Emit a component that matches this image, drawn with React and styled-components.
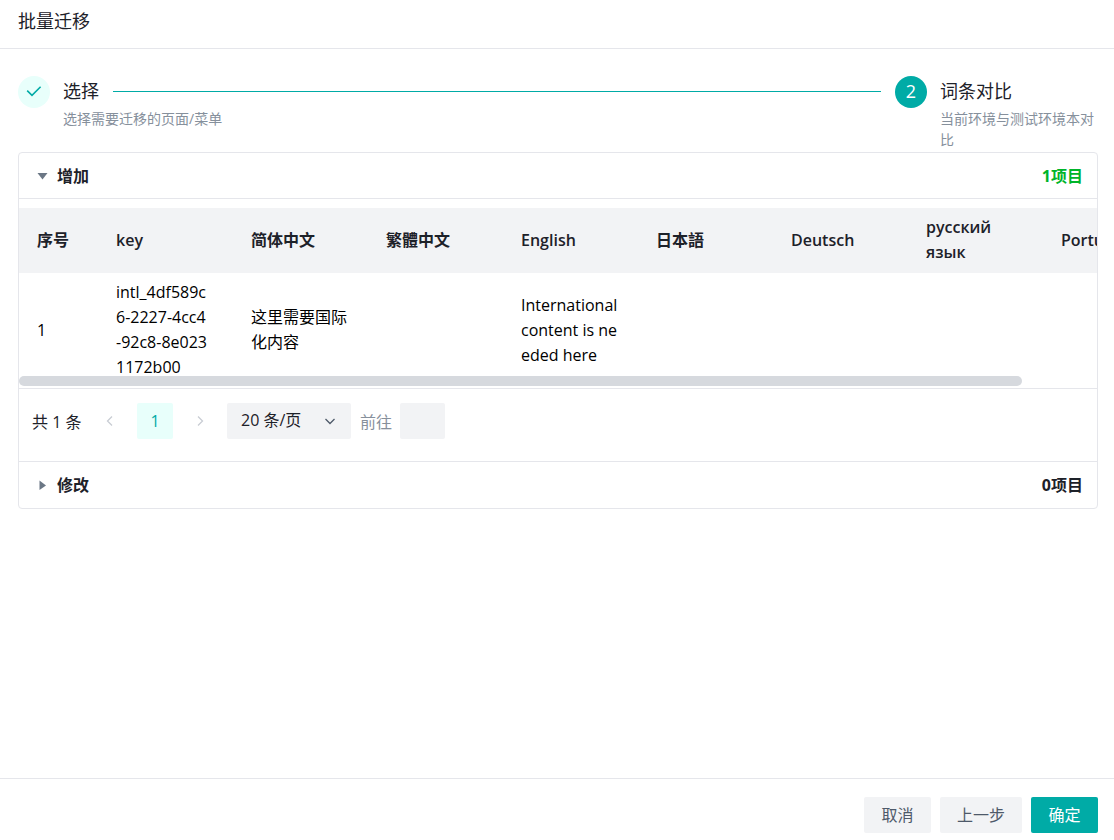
import { useEffect, useRef, useState } from 'react';
import styled, { createGlobalStyle } from 'styled-components';

const GlobalStyle = createGlobalStyle`
  * {
    box-sizing: border-box;
  }
  body {
    margin: 0;
    background: #fff;
    color: #1d2129;
    font-family: 'Open Sans', 'Noto Sans CJK SC', sans-serif;
    font-size: 16px;
  }
  button, input, select {
    font: inherit;
    color: inherit;
    border: none;
    outline: none;
  }
  button {
    padding: 0;
    background: none;
    cursor: pointer;
  }
`;

const Page = styled.div`
  display: flex;
  flex-direction: column;
  min-height: 100vh;
`;

const Header = styled.header`
  padding: 8px 18px 13px;
  border-bottom: 1px solid #e5e6eb;
`;

const Title = styled.h1`
  margin: 0;
  font-size: 18px;
  font-weight: 400;
  line-height: 27px;
`;

const Main = styled.main`
  flex: 1;
  padding: 27px 16px 18px 18px;
`;

const Steps = styled.ol`
  display: flex;
  gap: 14px;
  margin: 0 0 2px;
  padding: 0;
  list-style: none;
`;

const Step = styled.li`
  display: flex;
  gap: 13px;
  flex: ${({ $grow }) => ($grow ? '1' : 'none')};
`;

const StepIcon = styled.div`
  display: flex;
  align-items: center;
  justify-content: center;
  flex: none;
  width: 32px;
  height: 32px;
  padding-bottom: 2px;
  border-radius: 50%;
  font-size: 18px;
  background: ${({ $done }) => ($done ? '#e8fffb' : '#00aba6')};
  color: ${({ $done }) => ($done ? '#00aba6' : '#fff')};
`;

const StepContent = styled.div`
  flex: 1;
  max-width: ${({ $narrow }) => ($narrow ? '158px' : 'none')};
`;

const StepTitle = styled.div`
  display: flex;
  align-items: center;
  gap: 14px;
  margin-bottom: 2px;
  font-size: 18px;
  line-height: 30px;
`;

const StepLine = styled.span`
  flex: 1;
  height: 1px;
  background: #00aba6;
`;

const StepDescription = styled.div`
  font-size: 14px;
  line-height: 21px;
  color: #86909c;
`;

const Collapse = styled.div`
  border: 1px solid #e5e6eb;
  border-radius: 4px;
  overflow: hidden;
`;

const Item = styled.section`
  & + & {
    border-top: 1px solid #e5e6eb;
  }
`;

const ItemHeader = styled.button`
  display: flex;
  align-items: center;
  gap: 9px;
  width: 100%;
  height: 46px;
  padding: 0 14px 2px 18px;
  font-weight: 700;
  text-align: left;
  border-bottom: ${({ $open }) => ($open ? '1px solid #e5e6eb' : 'none')};
`;

const Arrow = styled.svg`
  flex: none;
  width: 11px;
  height: 11px;
  fill: #6b7785;
`;

const ItemCount = styled.span`
  margin-left: auto;
  color: ${({ $added }) => ($added ? '#00b42a' : '#1d2129')};
`;

const ItemBody = styled.div`
  padding: 9px 0 22px;
`;

const TableWrapper = styled.div`
  position: relative;
`;

const TableScroll = styled.div`
  overflow-x: auto;
  scrollbar-width: none;
`;

const Table = styled.table`
  width: 1159px;
  table-layout: fixed;
  border-collapse: separate;
  border-spacing: 0;
`;

const IndexCol = styled.col`
  width: 79px;
`;

const Th = styled.th`
  padding: 7px 18px 8px;
  font-weight: 600;
  line-height: 25px;
  text-align: left;
  background: #f2f3f5;
`;

const Td = styled.td`
  padding: 7px ${({ $code }) => ($code ? '24px' : '18px')} 8px 18px;
  line-height: 25px;
  color: #000;
  word-break: break-all;
  border-bottom: 1px solid #e5e6eb;
`;

const ScrollTrack = styled.div`
  position: absolute;
  left: 0;
  right: 0;
  bottom: 3px;
  height: 10px;
`;

const ScrollThumb = styled.div`
  height: 100%;
  border-radius: 5px;
  background: #d6d9de;
`;

const Pager = styled.nav`
  display: flex;
  align-items: center;
  gap: 9px;
  margin-top: 14px;
  padding-left: 13px;
`;

const Total = styled.span`
  min-width: 51px;
`;

const PagerButton = styled.button`
  display: flex;
  align-items: center;
  justify-content: center;
  width: 36px;
  height: 36px;
  border-radius: 2px;
  background: ${({ $active }) => ($active ? '#e8fffb' : 'transparent')};
  color: ${({ $active }) => ($active ? '#00aba6' : '#c9cdd4')};
`;

const SelectBox = styled.div`
  position: relative;
  color: #4e5969;
`;

const Select = styled.select`
  display: block;
  width: 124px;
  height: 36px;
  padding: 0 14px 2px;
  border-radius: 2px;
  background: #f2f3f5;
  color: #1d2129;
  appearance: none;
`;

const SelectArrow = styled.span`
  position: absolute;
  top: 0;
  right: 14px;
  display: flex;
  align-items: center;
  height: 100%;
  pointer-events: none;
`;

const JumpLabel = styled.label`
  display: flex;
  align-items: center;
  gap: 8px;
  color: #86909c;
`;

const JumpInput = styled.input`
  width: 45px;
  height: 36px;
  padding: 0 8px;
  border-radius: 2px;
  background: #f2f3f5;
  text-align: center;
`;

const Footer = styled.footer`
  display: flex;
  justify-content: flex-end;
  gap: 9px;
  padding: 18px 16px 7px;
  border-top: 1px solid #e5e6eb;
`;

const Button = styled.button`
  min-width: 67px;
  height: 36px;
  padding: 0 17px 2px;
  border-radius: 2px;
  background: ${({ $primary }) => ($primary ? '#00aba6' : '#f2f3f5')};
  color: ${({ $primary }) => ($primary ? '#fff' : '#4e5969')};
`;

const columns = [
  { title: '序号', field: 'index' },
  { title: 'key', field: 'key', code: true },
  { title: '简体中文', field: 'zhCN' },
  { title: '繁體中文', field: 'zhTW' },
  { title: 'English', field: 'en' },
  { title: '日本語', field: 'ja' },
  { title: 'Deutsch', field: 'de' },
  { title: 'русский язык', field: 'ru' },
  { title: 'Português', field: 'pt' },
];

const rows = [
  {
    index: 1,
    key: 'intl_4df589c6-2227-4cc4-92c8-8e0231172b00',
    zhCN: '这里需要国际化内容',
    en: 'International content is needed here',
  },
];

const Chevron = ({ d }) => (
  <svg width="14" height="14" viewBox="0 0 14 14" fill="none" stroke="currentColor" strokeWidth="1.3" aria-hidden="true">
    <path d={d} />
  </svg>
);

const EntryTable = () => {
  const scrollRef = useRef(null);
  const [thumb, setThumb] = useState({ width: 0, left: 0 });

  const updateThumb = () => {
    const { clientWidth, scrollWidth, scrollLeft } = scrollRef.current;
    setThumb({
      width: clientWidth < scrollWidth ? (clientWidth / scrollWidth) * 100 : 0,
      left: (scrollLeft / scrollWidth) * 100,
    });
  };

  useEffect(() => {
    updateThumb();
    window.addEventListener('resize', updateThumb);
    return () => window.removeEventListener('resize', updateThumb);
  }, []);

  return (
    <TableWrapper>
      <TableScroll ref={scrollRef} onScroll={updateThumb}>
        <Table>
          <colgroup>
            <IndexCol />
            <col span={columns.length - 1} />
          </colgroup>
          <thead>
            <tr>
              {columns.map((column) => (
                <Th key={column.field} scope="col">{column.title}</Th>
              ))}
            </tr>
          </thead>
          <tbody>
            {rows.map((row) => (
              <tr key={row.key}>
                {columns.map((column) => (
                  <Td key={column.field} $code={column.code}>{row[column.field]}</Td>
                ))}
              </tr>
            ))}
          </tbody>
        </Table>
      </TableScroll>
      <ScrollTrack>
        <ScrollThumb style={{ width: `${thumb.width}%`, marginLeft: `${thumb.left}%` }} />
      </ScrollTrack>
    </TableWrapper>
  );
};

const Pagination = () => {
  const [pageSize, setPageSize] = useState('20');
  const [jump, setJump] = useState('');

  return (
    <Pager>
      <Total>共 1 条</Total>
      <PagerButton type="button" aria-label="上一页" disabled>
        <Chevron d="M9 2.5 4.5 7 9 11.5" />
      </PagerButton>
      <PagerButton type="button" $active>1</PagerButton>
      <PagerButton type="button" aria-label="下一页" disabled>
        <Chevron d="M5 2.5 9.5 7 5 11.5" />
      </PagerButton>
      <SelectBox>
        <Select aria-label="每页条数" value={pageSize} onChange={(e) => setPageSize(e.target.value)}>
          <option value="10">10 条/页</option>
          <option value="20">20 条/页</option>
          <option value="50">50 条/页</option>
        </Select>
        <SelectArrow>
          <Chevron d="M2.5 5 7 9.5 11.5 5" />
        </SelectArrow>
      </SelectBox>
      <JumpLabel>
        前往
        <JumpInput type="text" value={jump} onChange={(e) => setJump(e.target.value)} />
      </JumpLabel>
    </Pager>
  );
};

const CollapseItem = ({ title, count, added, defaultOpen, children }) => {
  const [open, setOpen] = useState(Boolean(defaultOpen));

  return (
    <Item>
      <ItemHeader type="button" aria-expanded={open} $open={open} onClick={() => setOpen(!open)}>
        <Arrow viewBox="0 0 11 11" aria-hidden="true">
          <path d={open ? 'M.5 4h10L5.5 10.5z' : 'M2.5 1.5 9 6.5 2.5 11z'} />
        </Arrow>
        <span>{title}</span>
        <ItemCount $added={added}>{count}项目</ItemCount>
      </ItemHeader>
      {open && <ItemBody>{children}</ItemBody>}
    </Item>
  );
};

const App = () => {
  return (
    <Page>
      <GlobalStyle />
      <Header>
        <Title>批量迁移</Title>
      </Header>
      <Main>
        <Steps>
          <Step $grow>
            <StepIcon $done>
              <svg width="16" height="16" viewBox="0 0 16 16" fill="none" stroke="currentColor" strokeWidth="1.6" aria-hidden="true">
                <path d="M1.2 7.6 6 12.4 14.6 3.8" />
              </svg>
            </StepIcon>
            <StepContent>
              <StepTitle>
                选择
                <StepLine />
              </StepTitle>
              <StepDescription>选择需要迁移的页面/菜单</StepDescription>
            </StepContent>
          </Step>
          <Step aria-current="step">
            <StepIcon>2</StepIcon>
            <StepContent $narrow>
              <StepTitle>词条对比</StepTitle>
              <StepDescription>当前环境与测试环境本对比</StepDescription>
            </StepContent>
          </Step>
        </Steps>
        <Collapse>
          <CollapseItem title="增加" count={1} added defaultOpen>
            <EntryTable />
            <Pagination />
          </CollapseItem>
          <CollapseItem title="修改" count={0} />
        </Collapse>
      </Main>
      <Footer>
        <Button type="button">取消</Button>
        <Button type="button">上一步</Button>
        <Button type="button" $primary>确定</Button>
      </Footer>
    </Page>
  );
};

export default App;
